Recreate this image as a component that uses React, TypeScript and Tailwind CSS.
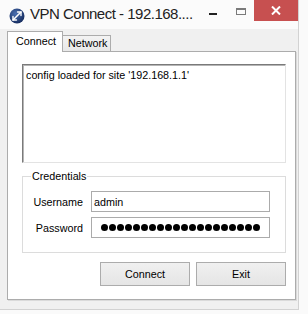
import React from "react";

const font = { fontFamily: '"Liberation Sans", Arial, sans-serif' };

function VpnIcon() {
  return (
    <svg width="16" height="16" viewBox="0 0 16 16">
      <defs>
        <radialGradient id="g" cx="0.4" cy="0.35" r="0.7">
          <stop offset="0" stopColor="#4a6fb0" />
          <stop offset="1" stopColor="#142a5c" />
        </radialGradient>
      </defs>
      <circle cx="8" cy="8" r="7.5" fill="url(#g)" />
      <path d="M4 12 L12 4" stroke="#fff" strokeWidth="1.6" strokeLinecap="round" />
      <path d="M8.5 4 L12 4 L12 7.5" stroke="#fff" strokeWidth="1.4" fill="none" strokeLinecap="round" strokeLinejoin="round" />
      <path d="M4 8.5 L4 12 L7.5 12" stroke="#fff" strokeWidth="1.4" fill="none" strokeLinecap="round" strokeLinejoin="round" />
    </svg>
  );
}

export default function App() {
  const dots = Array.from({ length: 20 });
  return (
    <div className="w-[308px] h-[314px] bg-[#fafafa] overflow-hidden" style={font}>
      <div className="w-[299px] h-[310px] bg-[#f0f0f0] border-r border-b border-[#d2d2d2] flex flex-col">
        {/* title bar */}
        <div className="h-[29px] bg-[#fbfbfb] flex items-start shrink-0">
          <div className="ml-[9px] mt-[8px]">
            <VpnIcon />
          </div>
          <div className="ml-[5px] mt-[5px] text-[15px] tracking-[-0.5px] text-[#222] leading-[18px]">
            VPN Connect - 192.168....
          </div>
          <div className="flex-1" />
          <div className="w-[8px] h-[2px] bg-[#222] mt-[13px]" />
          <div className="ml-[19px] mt-[8px] w-[10px] h-[7px] border border-t-2 border-[#7a7a7a]" />
          <div className="ml-[8px] w-[44px] h-[21px] bg-[#c75050] flex items-center justify-center">
            <svg width="10" height="9" viewBox="0 0 10 9">
              <path d="M1 0.5 L9 8.5 M9 0.5 L1 8.5" stroke="#fff" strokeWidth="2" />
            </svg>
          </div>
        </div>
        {/* body */}
        <div className="pl-[7px] flex flex-col">
          <div className="h-[22px] flex items-end text-[10.75px] text-black">
            <div className="relative z-10 -mb-px w-[56px] h-[21px] bg-white border border-b-0 border-[#acacac] pl-[8px] pt-[3px] leading-[13px]">
              Connect
            </div>
            <div className="w-[48px] h-[16px] bg-gradient-to-b from-[#f3f3f3] to-[#e8e8e8] border-t border-r border-[#acacac] pl-[5px] pt-[1px] leading-[13px]">
              Network
            </div>
          </div>
          <div className="w-[289px] h-[249px] bg-white border border-[#acacac] shadow-[1px_1px_0_#dadada] pl-[14px] pr-[9px] pt-[12px] flex flex-col text-[10.75px] text-black">
            <div className="h-[99px] border border-t-[#7a7a7a] border-l-[#7a7a7a] border-r-[#e3e3e3] border-b-[#e3e3e3] shadow-[inset_1px_1px_0_#b5b5b5] pl-[3px] pt-[3px] leading-[14px]">
              config loaded for site '192.168.1.1'
            </div>
            <div className="relative mt-[13px] h-[77px] border border-[#dcdcdc] pt-[14px] flex flex-col gap-[5px]">
              <div className="absolute -top-[8px] left-[8px] bg-white px-[1px] leading-[14px]">Credentials</div>
              <div className="flex items-center">
                <div className="w-[60px] text-right leading-[14px]">Username</div>
                <div className="ml-[8px] w-[179px] h-[21px] border border-[#ababab] pl-[2px] flex items-center leading-[14px]">
                  admin
                </div>
              </div>
              <div className="flex items-center">
                <div className="w-[60px] text-right leading-[14px]">Password</div>
                <div className="ml-[8px] w-[179px] h-[21px] border border-[#ababab] pl-[9px] flex items-center gap-px">
                  {dots.map((_, i) => (
                    <span key={i} className="w-[7px] h-[7px] rounded-full bg-black shrink-0" />
                  ))}
                </div>
              </div>
            </div>
            <div className="mt-[9px] flex justify-end gap-[6px]">
              <div className="w-[90px] h-[24px] border border-[#acacac] bg-gradient-to-b from-[#f0f0f0] to-[#e5e5e5] flex items-center justify-center leading-[14px]">
                Connect
              </div>
              <div className="w-[90px] h-[24px] border border-[#acacac] bg-gradient-to-b from-[#f0f0f0] to-[#e5e5e5] flex items-center justify-center leading-[14px]">
                Exit
              </div>
            </div>
          </div>
        </div>
      </div>
    </div>
  );
}
